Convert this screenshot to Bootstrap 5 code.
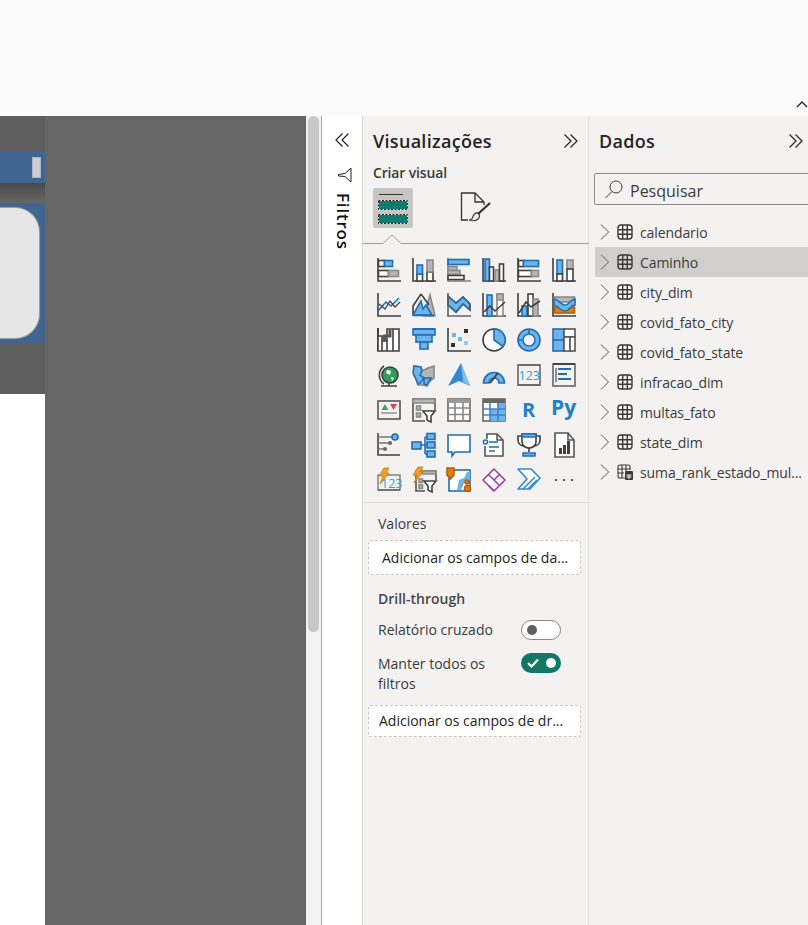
<!DOCTYPE html>
<html lang="pt">
<head>
<meta charset="UTF-8">
<meta name="viewport" content="width=device-width, initial-scale=1.0">
<title>Power BI</title>
<link href="https://cdn.jsdelivr.net/npm/bootstrap@5.3.0/dist/css/bootstrap.min.css" rel="stylesheet">
<style>
body { font-family: "Open Sans", "Noto Sans", sans-serif; color: #252423; background: #fff; overflow: hidden; }
.app-shell { width: 808px; height: 925px; overflow: hidden; }
.ribbon-strip { height: 116px; background: #fbfbfb; padding: 100px 0 0 0; }
.work-row { height: 809px; }

.canvas-col { width: 306px; background: #666; }
.page-clip { width: 45px; }
.clip-top { height: 36px; background: #5f5f5f; }
.clip-head { height: 31px; background: #3f6590; padding: 5px 4px 0 0; }
.clip-head i { display: block; width: 9px; height: 21px; background: #ccc; border: 1px solid #a9b6c6; }
.clip-shade { height: 20px; background: linear-gradient(#4a4a4a, #666); }
.clip-body { height: 141px; background: #3f6590; padding: 5px 6px 6px 0; }
.clip-pill { height: 100%; background: #e6e6e6; border-radius: 0 24px 24px 0; box-shadow: 0 0 1px 1px #a5a5a5; }
.clip-low { height: 50px; background: #5f5f5f; }
.clip-white { height: 531px; background: #fff; }

.scroll-col { width: 15px; background: #f3f3f3; padding: 0 2px; }
.scroll-thumb { height: 516px; background: #c8c8c8; border-radius: 6px; }
.filter-col { width: 42px; border-left: 1px solid #a6a6a6; border-right: 1px solid #d8d6d4; background: #fff; }
.filter-label { writing-mode: vertical-rl; font-size: 17px; font-weight: 600; line-height: 20px; color: #111; margin: 10px 0 0 2px; letter-spacing: .8px; }

.viz-col { width: 226px; background: #f3f2f1; border-right: 1px solid #e1dfdd; }
.data-col { width: 219px; background: #f3f2f1; flex: none; }
.pane-title { font-size: 18px; font-weight: 600; line-height: 24px; color: #252423; letter-spacing: .3px; }
.viz-head { padding: 13px 9px 0 10px; height: 47px; }
.data-head { padding: 13px 4px 0 10px; height: 57px; }
.sub-title { font-size: 14px; font-weight: 600; line-height: 20px; padding-left: 10px; letter-spacing: -.15px; color: #3b3a39; }
.build-row { padding: 5px 0 0 10px; gap: 47px; height: 51px; }
.build-on { width: 40px; height: 40px; background: #c8c6c4; border-radius: 2px; }
.tab-rule { height: 10px; }
.viz-grid { display: grid; grid-template-columns: repeat(6, 24px); grid-auto-rows: 24px; gap: 11px; padding: 14px 0 0 14px; height: 258px; }
.viz-grid svg { fill: none; stroke: #404040; stroke-width: 1.6; width: 24px; height: 24px; overflow: visible; }
.vb { stroke: #1f6fb5; }
.vl { fill: #6fb3ea; }
.vg { fill: #b5b5b5; stroke: #8a8a8a; }
.vw { fill: #fff; }
.vd { fill: #404040; stroke: none; }
.vo { fill: #e07a14; stroke: #b85f08; }
.vt { fill: #1f80c8; stroke: none; font-family: "Open Sans", sans-serif; font-weight: 700; }
.vc { fill: #3a9ad9; stroke: none; font-family: "Open Sans", sans-serif; font-size: 12.500px; }
.well-zone { border-top: 1px solid #e1dfdd; padding: 11px 7px 0 5px; }
.well-label { font-size: 14px; line-height: 20px; padding-left: 10px; color: #3b3a39; }
.drop-zone { background: #fff; border: 1px dashed #c8c6c4; border-radius: 2px; font-size: 14px; color: #252423; white-space: nowrap; }
.zone-a { height: 35px; line-height: 33px; padding-left: 13px; margin: 6px 0 14px; }
.zone-b { height: 32px; line-height: 30px; padding-left: 10px; margin-top: 11px; }
.drill-title { font-size: 14px; font-weight: 600; line-height: 20px; padding-left: 10px; color: #484644; }
.opt-row { padding: 11px 20px 0 10px; }
.opt-row-gap { padding-top: 14px; }
.opt-row-gap .sw-on { margin-top: -1px; }
.opt-text { font-size: 14px; line-height: 20px; width: 128px; color: #3b3a39; }
.sw-off, .sw-on { width: 40px; height: 20px; border-radius: 10px; flex: none; position: relative; }
.sw-off { background: #fff; border: 1px solid #8a8886; }
.sw-off::after { content: ""; position: absolute; left: 5px; top: 4px; width: 10px; height: 10px; border-radius: 50%; background: #605e5c; }
.sw-on { background: #117865; }
.sw-on::after { content: ""; position: absolute; right: 5px; top: 5px; width: 10px; height: 10px; border-radius: 50%; background: #fff; }
.sw-on svg { position: absolute; left: 6px; top: 5px; }

.find-box { height: 32px; width: 230px; margin-left: 5px; background: #f3f2f1; border: 1px solid #8a8886; border-radius: 2px; font-size: 16px; padding-left: 9px; gap: 6px; color: #3b3a39; }
.find-box span { padding-top: 3px; }
.tree-list { padding-top: 12px; }
.tree-row { height: 30px; margin-left: 6px; padding-left: 5px; font-size: 14px; color: #3b3a39; gap: 7px; white-space: nowrap; letter-spacing: -.1px; }
.tree-on { background: #d0cfcd; }
</style>
</head>
<body>
<svg width="0" height="0" class="position-absolute">
  <symbol id="tbl" viewBox="0 0 16 16"><rect x="1" y="1" width="14" height="14" rx="3" fill="none" stroke="#3b3a39" stroke-width="1.400"/><path d="M5.700 1V15M10.300 1V15M1 5.700H15M1 10.300H15" fill="none" stroke="#3b3a39" stroke-width="1.400"/></symbol>
  <symbol id="arrow" viewBox="0 0 10 16"><path d="M1 .5 8.500 8 1 15.500" fill="none" stroke="#605e5c" stroke-width="1"/></symbol>
  <symbol id="dbl" viewBox="0 0 16 16"><path d="M1.500 1.500 8 8l-6.500 6.500M7.500 1.500 14 8l-6.500 6.500" fill="none" stroke="#252423" stroke-width="1.200"/></symbol>
</svg>
<div class="app-shell d-flex flex-column">
  <div class="ribbon-strip d-flex justify-content-end">
    <svg width="12" height="8" viewBox="0 0 12 8"><path d="M1 7 6 2l5 5" fill="none" stroke="#252423" stroke-width="1.400"/></svg>
  </div>
  <div class="work-row d-flex">
    <div class="canvas-col flex-none">
      <div class="page-clip">
        <div class="clip-top"></div>
        <div class="clip-head d-flex justify-content-end"><i></i></div>
        <div class="clip-shade"></div>
        <div class="clip-body"><div class="clip-pill"></div></div>
        <div class="clip-low"></div>
        <div class="clip-white"></div>
      </div>
    </div>
    <div class="scroll-col flex-none"><div class="scroll-thumb"></div></div>
    <div class="filter-col flex-none d-flex flex-column align-items-center">
      <svg class="mt-3" width="16" height="16" viewBox="0 0 16 16"><g transform="scale(-1 1) translate(-16 0)"><use href="#dbl" width="16" height="16"/></g></svg>
      <svg style="margin:19px 0 0 5px" width="15" height="16" viewBox="0 0 15 16"><path d="M14 1V15L8 9.500 1.500 9V7.500L8 6.500Z" fill="none" stroke="#252423" stroke-width="1"/></svg>
      <div class="filter-label">Filtros</div>
    </div>

    <div class="viz-col flex-none">
      <div class="viz-head d-flex justify-content-between">
        <span class="pane-title">Visualizações</span>
        <svg class="mt-1" width="16" height="16"><use href="#dbl"/></svg>
      </div>
      <div class="sub-title">Criar visual</div>
      <div class="build-row d-flex">
        <div class="build-on d-flex align-items-center justify-content-center">
          <svg width="30" height="31" viewBox="0 0 30 31"><path d="M1 1.500H25" stroke="#333" fill="none"/><rect x=".5" y="7.500" width="29" height="9" fill="#0f7b6c" stroke="#eee"/><rect x=".5" y="7.500" width="29" height="9" fill="none" stroke="#222" stroke-dasharray="2 1.500"/><rect x=".5" y="21.500" width="29" height="9" fill="#0f7b6c" stroke="#eee"/><rect x=".5" y="21.500" width="29" height="9" fill="none" stroke="#222" stroke-dasharray="2 1.500"/></svg>
        </div>
        <svg width="32" height="34" viewBox="0 0 32 34"><path d="M8 32H1.500V5H15l9 9v3M15 5v9h9" fill="none" stroke="#333" stroke-width="1.300"/><path d="M30 15 18 26" fill="none" stroke="#333" stroke-width="2.300"/><path d="M18 25c-4-1-5 3-6 6-1 1-3 1-3 1s6 2 9-1c2-2 2-4 0-6Z" fill="none" stroke="#333" stroke-width="1.100"/></svg>
      </div>
      <div class="tab-rule"><svg class="d-block" width="226" height="10" viewBox="0 0 226 10"><path d="M0 9.500H20L29 1l9 8.500H226" fill="none" stroke="#a19f9d"/></svg></div>

      <div class="viz-grid">
        <svg viewBox="0 0 24 24"><path d="M1 0V23H24"/><rect x="1.500" y="2.500" width="6" height="6" class="vw"/><rect x="7.500" y="2.500" width="8" height="6" class="vl vb"/><rect x="1.500" y="12.500" width="10" height="6" class="vw"/><rect x="11.500" y="12.500" width="10" height="6" class="vg"/></svg>
        <svg viewBox="0 0 24 24"><path d="M1 0V23H24"/><rect x="5" y="16" width="5.500" height="7" class="vw"/><rect x="5" y="7" width="5.500" height="9" class="vl vb"/><rect x="15" y="14" width="6" height="9" class="vw"/><rect x="15" y="2" width="6" height="12" class="vg"/></svg>
        <svg viewBox="0 0 24 24"><path d="M1 0V23H24" stroke="#808080"/><rect x="1" y="1.500" width="21" height="5" class="vl vb"/><rect x="1" y="8.500" width="9" height="4" class="vg"/><rect x="1" y="12.500" width="12" height="4" class="vg"/><rect x="1" y="17.500" width="16" height="4" class="vw"/></svg>
        <svg viewBox="0 0 24 24"><path d="M1 0V23H24"/><rect x="3" y="1" width="4.500" height="22" class="vl vb"/><rect x="7.500" y="9" width="4" height="14" class="vw"/><rect x="13" y="12" width="4" height="11" class="vg"/><rect x="17.500" y="6" width="4" height="17" class="vw"/></svg>
        <svg viewBox="0 0 24 24"><path d="M1 0V23H24"/><rect x="1.500" y="2.500" width="5" height="6" class="vw"/><rect x="6.500" y="2.500" width="15" height="6" class="vl vb"/><rect x="1.500" y="12.500" width="13" height="6" class="vw"/><rect x="14.500" y="12.500" width="7" height="6" class="vg"/></svg>
        <svg viewBox="0 0 24 24"><path d="M1 0V23H24"/><rect x="5" y="2" width="5.500" height="14" class="vl vb"/><rect x="5" y="16" width="5.500" height="7" class="vw"/><rect x="15" y="2" width="6" height="9" class="vg"/><rect x="15" y="11" width="6" height="12" class="vw"/></svg>

        <svg viewBox="0 0 24 24"><path d="M1 0V23H24"/><path d="M1 18 9 9l5 4 8-8" class="vb"/><path d="M2 11l6 5 5-8 5 6 5-5" stroke-width="1.200"/></svg>
        <svg viewBox="0 0 24 24"><path d="M18 2 23 23H12Z" class="vg"/><path d="M9 1 1 13v9" /><path d="M9 1 17 12"/><path d="M9 8 1 22H20L14 12l-3 4Z" class="vl vb"/><path d="M1 22.500H22" class="vb"/></svg>
        <svg viewBox="0 0 24 24"><path d="M1 3 9 10l7-6 7 7V17L16 11 9 19 1 12Z" class="vl"/><path d="M1 3 9 10l7-6 7 7" class="vb"/><path d="M1 12 9 19l7-8 7 6" class="vb"/><path d="M1 0V23H24" stroke="#606060"/></svg>
        <svg viewBox="0 0 24 24"><path d="M1 0V23H24"/><rect x="5" y="2" width="5" height="21" class="vl vb"/><rect x="15" y="1" width="6" height="22" class="vw" stroke="#888"/><rect x="15" y="1" width="6" height="6" class="vg"/><path d="M2 19 8 13l5 5 10-9"/></svg>
        <svg viewBox="0 0 24 24"><path d="M1 0V23H24"/><rect x="5" y="13" width="5" height="10" class="vl vb"/><rect x="11" y="1" width="5" height="22" class="vw"/><rect x="16" y="6" width="5" height="17" class="vg"/><path d="M2 20 9 9l5 5 9-6"/></svg>
        <svg viewBox="0 0 24 24"><path d="M1 0V23H24"/><rect x="2.500" y="4" width="20" height="5" class="vg"/><rect x="2.500" y="14" width="20" height="6" class="vo"/><path d="M2 6c6 1 6 6 11 6s5-6 10-6v6c-5 0-5 6-10 6S8 14 2 12Z" class="vl vb"/></svg>

        <svg viewBox="0 0 24 24"><path d="M1 0V23" stroke-width="2"/><path d="M1 8H5V23H1ZM5 13H10V23H5ZM10 1H16V23H10ZM16 1H22V23H16Z" class="vw"/><path d="M7.500 13V8H13V2" stroke-width="3" stroke="#555"/></svg>
        <svg viewBox="0 0 24 24"><rect x="1" y="1" width="22" height="6" class="vl vb"/><path d="M1 1H23" stroke-width="2" class="vb"/><rect x="4" y="7" width="16" height="7" class="vl vb"/><rect x="8" y="14" width="8" height="7" class="vl vb"/></svg>
        <svg viewBox="0 0 24 24"><path d="M1 0V23H24"/><rect x="5" y="5" width="4" height="4" fill="#6fb3ea" stroke="none"/><rect x="11" y="9" width="4" height="4" fill="#6fb3ea" stroke="none"/><rect x="17" y="1" width="4" height="4" fill="#333" stroke="none"/><rect x="4" y="15" width="4" height="4" fill="#333" stroke="none"/><rect x="17" y="13" width="4" height="4" fill="#9cc8ec" stroke="none"/></svg>
        <svg viewBox="0 0 24 24"><circle cx="12" cy="12" r="11" class="vw"/><path d="M12 1A11 11 0 0 1 21 18.500L12 12Z" class="vl vb"/></svg>
        <svg viewBox="0 0 24 24"><circle cx="12" cy="12" r="8.500" stroke-width="5" stroke="#6fb3ea"/><circle cx="12" cy="12" r="11" class="vb" stroke-width="1.600"/><circle cx="12" cy="12" r="6" class="vb" stroke-width="1.600"/><path d="M1 12H6M12 1V6" class="vb"/></svg>
        <svg viewBox="0 0 24 24"><rect x="1" y="1" width="11" height="22" class="vl vb"/><path d="M1 12H12" class="vb"/><rect x="12" y="1" width="11" height="8" stroke="#555" class="vw"/><rect x="12" y="9" width="6" height="14" stroke="#555" class="vw"/><rect x="18" y="9" width="5" height="14" stroke="#555" class="vw"/></svg>

        <svg viewBox="0 0 24 24"><circle cx="13" cy="12" r="8" fill="#2f9e5b" stroke="#404040"/><path d="M10 7l4 1-1 4-4-2ZM14 14l3 1-2 3Z" fill="#fff" stroke="none"/><path d="M7 3A11 11 0 0 0 7 21M4 23H20M12 20V23" /></svg>
        <svg viewBox="0 0 24 24"><path d="M2 3 9 4l1 4 4-2 2-1 6-2v12l-5 4-2 4-4-1-5 0-2-6-2-4Z" class="vg"/><path d="M2 3 9 4l1 4-2 4 4 3-4 5-2 1-3-7-2-4Z" class="vl vb"/><path d="M12 15l7 0-4 7-3-1Z" class="vl vb"/></svg>
        <svg viewBox="0 0 24 24"><path d="M14 0 23 23 12 18 1 23Z" fill="#2f89d6" stroke="none"/><path d="M14 0 16 19 23 23Z" fill="#7cc0ef" stroke="none"/></svg>
        <svg viewBox="0 0 24 24"><path d="M1.500 20A10.500 10.500 0 0 1 22.500 20H17A5 5 0 0 0 7 20Z" class="vl vb"/><path d="M8 20 16 10" stroke-width="2"/></svg>
        <svg viewBox="0 0 24 24"><rect x="1" y="2" width="22" height="20" fill="#f3f2f1" stroke="#666"/><path d="M1 2H23M1 22H23" stroke-width="1.600" stroke="#666"/><text x="1.500" y="17" class="vc">123</text></svg>
        <svg viewBox="0 0 24 24"><rect x="1" y="1" width="22" height="22" stroke="#666"/><path d="M1 1H23" stroke-width="1.800"/><path d="M6 6h13M6 11h9M6 16h13" class="vb" stroke-width="1.800"/><path d="M4 5V19" stroke="#777"/></svg>

        <svg viewBox="0 0 24 24"><rect x="1" y="3" width="22" height="18" stroke="#555"/><path d="M8 6l3.500 6h-7Z" fill="#3fa35a" stroke="none"/><path d="M13 6h7l-3.500 6Z" fill="#d8434e" stroke="none"/><path d="M4 15H20" stroke="#999"/></svg>
        <svg viewBox="0 0 24 24"><path d="M13 23H1V1H23V12" stroke="#555"/><path d="M1 1H23V5H1Z" class="vg"/><rect x="4.500" y="8" width="4" height="4" class="vg"/><rect x="4.500" y="15" width="4" height="4" class="vg"/><path d="M11 13H23L19 18V24L15 22V18Z" class="vw"/></svg>
        <svg viewBox="0 0 24 24"><rect x="1" y="1" width="22" height="22" stroke="#666" class="vw"/><path d="M1 3H23" stroke-width="4" stroke="#999"/><path d="M1 10H23M1 16.500H23M8 5V23M16 5V23" stroke="#888"/></svg>
        <svg viewBox="0 0 24 24"><rect x="1" y="1" width="22" height="22" stroke="#666" class="vw"/><path d="M1 3H23" stroke-width="4" stroke="#666"/><rect x="8" y="11" width="8" height="12" fill="#6fb3ea" stroke="none"/><rect x="16" y="5" width="7" height="18" fill="#6fb3ea" stroke="none"/><path d="M1 11H23M1 17H23M8 5V23M16 5V23" stroke="#3b84c5"/></svg>
        <svg viewBox="0 0 24 24"><text x="5" y="19" font-size="20" class="vt">R</text></svg>
        <svg viewBox="0 0 24 24"><text x="-1" y="17" font-size="21" class="vt">Py</text></svg>

        <svg viewBox="0 0 24 24"><path d="M1 0V22H23" stroke-width="1.600"/><path d="M1 4H17M1 10H13M1 16H8" stroke="#777"/><circle cx="18" cy="4" r="3" class="vl vb"/><circle cx="13" cy="10" r="2" fill="#666" stroke="none"/><circle cx="8" cy="16" r="2" fill="#666" stroke="none"/></svg>
        <svg viewBox="0 0 24 24"><rect x="0" y="9" width="9" height="7" class="vl vb"/><path d="M9 12H13M13 4V21M13 4H15M13 12H15M13 21H15" class="vb"/><rect x="15" y="0.500" width="8" height="6" class="vl vb"/><rect x="15" y="9" width="8" height="6" class="vl vb"/><rect x="15" y="18" width="8" height="6" class="vl vb"/></svg>
        <svg viewBox="0 0 24 24"><path d="M1 2H23V19H8L5 23V19H1Z" class="vb vw"/></svg>
        <svg viewBox="0 0 24 24"><path d="M5 6V1H15L21 7V23H3V13" stroke="#555" class="vw"/><path d="M15 1V7H21" stroke="#555"/><circle cx="3.500" cy="9" r="2" class="vb vw"/><path d="M7 9H16M7 14H17M7 18H13" class="vb"/></svg>
        <svg viewBox="0 0 24 24"><path d="M5 3H1V7C1 11 4 13 7 13M19 3H23V7C23 11 20 13 17 13"/><path d="M5 1H19V9C19 13 15 15 12 15S5 13 5 9Z" class="vw"/><path d="M5 1H19V4H5Z" class="vl vb"/><path d="M12 15V19"/><path d="M6 20H18V23H6Z" class="vl vb"/></svg>
        <svg viewBox="0 0 24 24"><path d="M3 0H16L22 7V24H3Z" stroke="#555" class="vw"/><path d="M16 0V7H22" stroke="#555"/><rect x="7" y="15" width="3" height="6" class="vd"/><rect x="11" y="12" width="3" height="9" class="vd"/><rect x="15" y="8" width="3" height="13" class="vd"/></svg>

        <svg viewBox="0 0 24 24"><rect x="1" y="7" width="22" height="15" stroke="#888" fill="#f3f2f1"/><text x="4" y="19.500" class="vc">123</text><path d="M1 22H23" stroke="#666" stroke-width="1.500"/><path d="M7 0H12L9 5H12L3 16 6 8H2Z" fill="#f2a02a" stroke="#c67610" stroke-width=".8"/></svg>
        <svg viewBox="0 0 24 24"><path d="M13 23H4V3H24V12" stroke="#555"/><path d="M8 3H24V6H8Z" class="vg"/><rect x="7" y="11" width="3.500" height="3.500" class="vg"/><rect x="7" y="17" width="3.500" height="3.500" class="vg"/><path d="M12 13H24L20 18V24L16 22V18Z" class="vw"/><path d="M6 -1H11L8 4H11L2 15 5 7H1Z" fill="#f2a02a" stroke="#c67610" stroke-width=".8"/></svg>
        <svg viewBox="0 0 24 24"><rect x="2" y="2" width="21" height="21" class="vw vb"/><path d="M10 22 12 12l5-2 3-6h3V13l-6 2-3 7Z" fill="#6fb3ea" stroke="none"/><path d="M0 0H7V7L3.500 11 0 7Z" class="vo"/><circle cx="20" cy="14" r="2" class="vo"/><circle cx="20.500" cy="20.500" r="3" class="vo"/></svg>
        <svg viewBox="0 0 24 24" style="stroke:#a13fa8"><path d="M12 1 23 12 12 23 1 12Z" stroke-linejoin="round" class="vw"/><path d="M6.500 6.500 17.500 17.500M17.500 6.500 12 12M6.500 17.500 12 23" /></svg>
        <svg viewBox="0 0 24 24" style="stroke:#2f89d6"><path d="M1 1H14L23 10 13 21H1L10 11Z" stroke-linejoin="round" class="vw"/><path d="M6 21 18 9" /><path d="M11 21 20 12"/></svg>
        <svg viewBox="0 0 24 24"><circle cx="4" cy="12" r="1.100" fill="#333" stroke="none"/><circle cx="12" cy="12" r="1.100" fill="#333" stroke="none"/><circle cx="20" cy="12" r="1.100" fill="#333" stroke="none"/></svg>
      </div>

      <div class="well-zone">
        <div class="well-label">Valores</div>
        <div class="drop-zone zone-a">Adicionar os campos de da...</div>
        <div class="drill-title">Drill-through</div>
        <div class="opt-row d-flex align-items-start justify-content-between">
          <span class="opt-text text-nowrap">Relatório cruzado</span>
          <span class="sw-off"></span>
        </div>
        <div class="opt-row opt-row-gap d-flex align-items-start justify-content-between">
          <span class="opt-text">Manter todos os filtros</span>
          <span class="sw-on"><svg width="12" height="10" viewBox="0 0 12 10"><path d="M1 5 4.500 8.500 11 1.500" fill="none" stroke="#fff" stroke-width="2.200"/></svg></span>
        </div>
        <div class="drop-zone zone-b">Adicionar os campos de dr...</div>
      </div>
    </div>

    <div class="data-col">
      <div class="data-head d-flex justify-content-between">
        <span class="pane-title">Dados</span>
        <svg class="mt-1" width="16" height="16"><use href="#dbl"/></svg>
      </div>
      <div class="find-box d-flex align-items-center">
        <svg width="20" height="20" viewBox="0 0 20 20"><circle cx="12" cy="8" r="6" fill="none" stroke="#3b3a39"/><path d="M8 12.500 1.500 19" fill="none" stroke="#3b3a39"/></svg>
        <span>Pesquisar</span>
      </div>
      <div class="tree-list">
        <div class="tree-row d-flex align-items-center"><svg width="10" height="16"><use href="#arrow"/></svg><svg width="16" height="16"><use href="#tbl"/></svg><span>calendario</span></div>
        <div class="tree-row tree-on d-flex align-items-center"><svg width="10" height="16"><use href="#arrow"/></svg><svg width="16" height="16"><use href="#tbl"/></svg><span>Caminho</span></div>
        <div class="tree-row d-flex align-items-center"><svg width="10" height="16"><use href="#arrow"/></svg><svg width="16" height="16"><use href="#tbl"/></svg><span>city_dim</span></div>
        <div class="tree-row d-flex align-items-center"><svg width="10" height="16"><use href="#arrow"/></svg><svg width="16" height="16"><use href="#tbl"/></svg><span>covid_fato_city</span></div>
        <div class="tree-row d-flex align-items-center"><svg width="10" height="16"><use href="#arrow"/></svg><svg width="16" height="16"><use href="#tbl"/></svg><span>covid_fato_state</span></div>
        <div class="tree-row d-flex align-items-center"><svg width="10" height="16"><use href="#arrow"/></svg><svg width="16" height="16"><use href="#tbl"/></svg><span>infracao_dim</span></div>
        <div class="tree-row d-flex align-items-center"><svg width="10" height="16"><use href="#arrow"/></svg><svg width="16" height="16"><use href="#tbl"/></svg><span>multas_fato</span></div>
        <div class="tree-row d-flex align-items-center"><svg width="10" height="16"><use href="#arrow"/></svg><svg width="16" height="16"><use href="#tbl"/></svg><span>state_dim</span></div>
        <div class="tree-row d-flex align-items-center"><svg width="10" height="16"><use href="#arrow"/></svg><svg width="16" height="16" viewBox="0 0 16 16"><path d="M8 14H3a2 2 0 0 1-2-2V3a2 2 0 0 1 2-2h8a2 2 0 0 1 2 2v3M5 1V14M9 1V7M1 5H13M1 9H7" fill="none" stroke="#3b3a39" stroke-width="1.100"/><rect x="8" y="7" width="8" height="9" rx="1" fill="#3b3a39"/><path d="M9.500 11H14.500M9.500 13H14.500M12 11V15" stroke="#f3f2f1" fill="none"/></svg><span>suma_rank_estado_mul...</span></div>
      </div>
    </div>
  </div>
</div>
</body>
</html>
